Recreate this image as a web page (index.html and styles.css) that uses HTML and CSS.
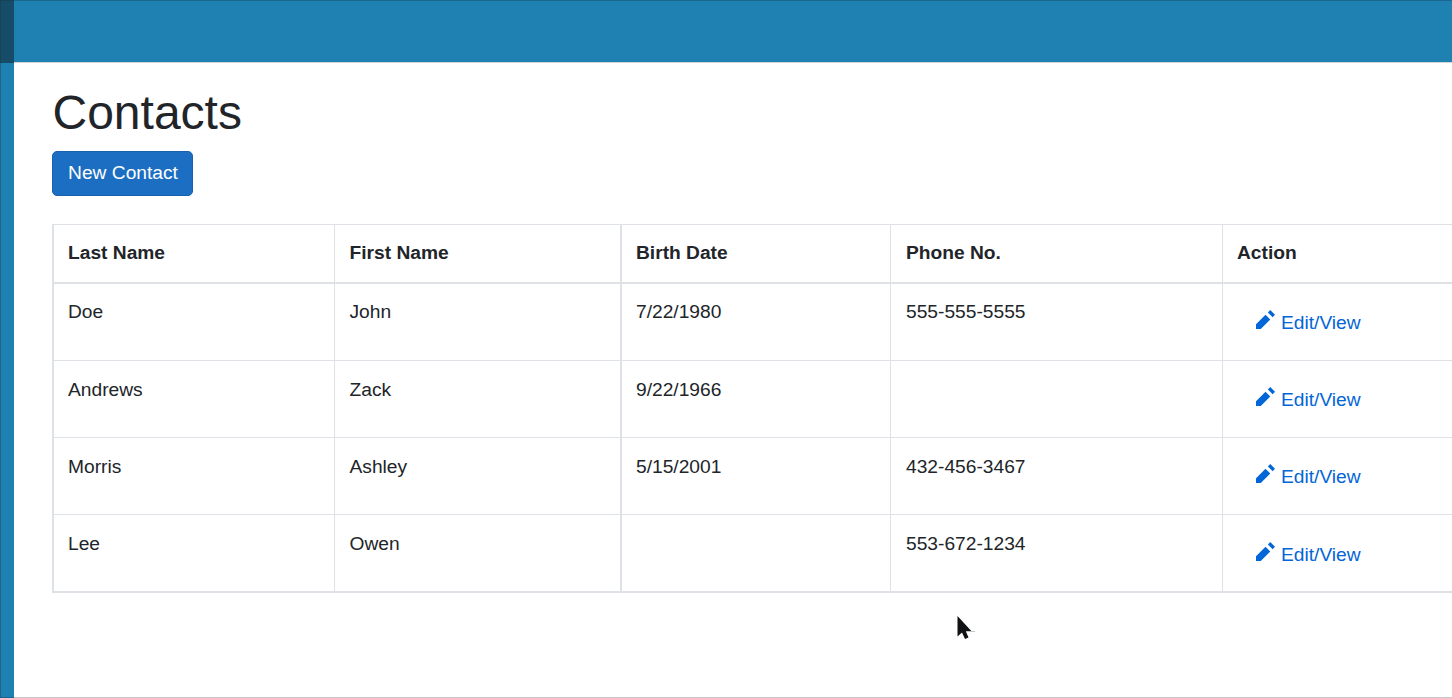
FILE: index.html
```html
<!DOCTYPE html>
<html lang="en">
<head>
<meta charset="utf-8">
<title>Contacts</title>
<link rel="stylesheet" href="styles.css">
</head>
<body>
<svg class="symbols" width="0" height="0" aria-hidden="true">
  <symbol id="pencil" viewBox="0 0 8 8"><path d="M6 0 5 1l2 2 1-1-2-2zM4 2 0 6v2h2l4-4-2-2z"/></symbol>
</svg>
<div class="app">
  <aside class="sidebar"><div class="sidebar-top"></div></aside>
  <div class="page">
    <header class="topbar"></header>
    <main class="content">
      <h1 class="title">Contacts</h1>
      <button class="button" type="button">New Contact</button>
      <table class="contacts">
        <colgroup><col class="col-last"><col class="col-first"><col class="col-birth"><col class="col-phone"><col class="col-action"></colgroup>
        <thead>
          <tr><th>Last Name</th><th>First Name</th><th>Birth Date</th><th>Phone No.</th><th>Action</th></tr>
        </thead>
        <tbody>
          <tr><td>Doe</td><td>John</td><td>7/22/1980</td><td>555-555-5555</td><td><a class="edit"><svg class="icon"><use href="#pencil"/></svg>Edit/View</a></td></tr>
          <tr><td>Andrews</td><td>Zack</td><td>9/22/1966</td><td></td><td><a class="edit"><svg class="icon"><use href="#pencil"/></svg>Edit/View</a></td></tr>
          <tr><td>Morris</td><td>Ashley</td><td>5/15/2001</td><td>432-456-3467</td><td><a class="edit"><svg class="icon"><use href="#pencil"/></svg>Edit/View</a></td></tr>
          <tr><td>Lee</td><td>Owen</td><td></td><td>553-672-1234</td><td><a class="edit"><svg class="icon"><use href="#pencil"/></svg>Edit/View</a></td></tr>
        </tbody>
      </table>
    </main>
  </div>
  <svg class="cursor" viewBox="0 0 18 25"><path d="M.5 0v20.500l4.500-4 3 6.500 3.500-1.500-2.500-5.700h6z" fill="#101114"/><path d="M9 15.500h9" stroke="#c4c4c8" stroke-width="1"/></svg>
</div>
</body>
</html>
```

FILE: styles.css
```css
* { box-sizing: border-box; }
body {
  margin: 0;
  overflow: hidden;
  font: 19.2px/28.8px "Liberation Sans", Arial, sans-serif;
  color: #212529;
  background: #fff;
}
.symbols { position: absolute; }
.app {
  position: relative;
  display: flex;
  height: 698px;
  overflow: hidden;
}
.sidebar {
  flex: 0 0 14px;
  background: #1f80b2;
  border-left: 1px solid #1a658c;
  border-bottom: 1px solid #1a658c;
}
.sidebar-top {
  height: 63px;
  margin-left: -1px;
  background: #154c68;
  border-top: 1px solid #174258;
  border-left: 1px solid #174258;
}
.page {
  flex: 1;
  min-width: 0;
  border-bottom: 1px solid #c8c8c8;
}
.topbar {
  height: 63px;
  background: #1f80b2;
  border-top: 1px solid #1a6890;
  border-bottom: 1px solid #d2d4d9;
}
.content { padding: 21px 0 0 38px; }
.title {
  margin: 0 0 9px;
  padding-left: 0.5px;
  font-size: 48px;
  line-height: 58px;
  font-weight: 400;
}
.button {
  display: block;
  width: 141px;
  height: 45px;
  margin: 0 0 28px;
  padding: 0 0 0 1px;
  font: inherit;
  color: #fff;
  background: #1b6ec2;
  border: 1px solid #1861ac;
  border-radius: 5px;
}
.contacts {
  width: 1471px;
  table-layout: fixed;
  border-collapse: separate;
  border-spacing: 0;
}
.col-last { width: 283px; }
.col-first { width: 287px; }
.col-birth { width: 269px; }
.col-phone { width: 332px; }
.col-action { width: 300px; }
.contacts th,
.contacts td {
  height: 77px;
  padding: 14px 14px 0 15px;
  text-align: left;
  vertical-align: top;
  border: 0 solid #dee2e6;
  border-width: 0 1px 1px 0;
}
.contacts tr + tr td { padding-top: 15px; }
.contacts th {
  height: 60px;
  border-top-width: 1px;
  border-bottom-width: 2px;
}
.contacts th:first-child,
.contacts td:first-child { border-left-width: 2px; padding-left: 14px; }
.contacts th:nth-child(2),
.contacts td:nth-child(2) { border-right-width: 2px; padding-left: 14.5px; }
.contacts th:nth-child(3),
.contacts td:nth-child(3),
.contacts th:last-child,
.contacts td:last-child { padding-left: 14px; }
.contacts tr:last-child td { height: 78px; border-bottom-width: 2px; }
.edit {
  display: flex;
  gap: 6px;
  padding: 11px 0 0 19px;
  color: #0366d6;
}
.contacts tr + tr:not(:last-child) .edit { padding-top: 10px; }
.icon {
  width: 19px;
  height: 19px;
  margin-top: 1px;
  fill: #0366d6;
}
.cursor {
  position: absolute;
  left: 957px;
  top: 616px;
  width: 18px;
  height: 25px;
}
```
